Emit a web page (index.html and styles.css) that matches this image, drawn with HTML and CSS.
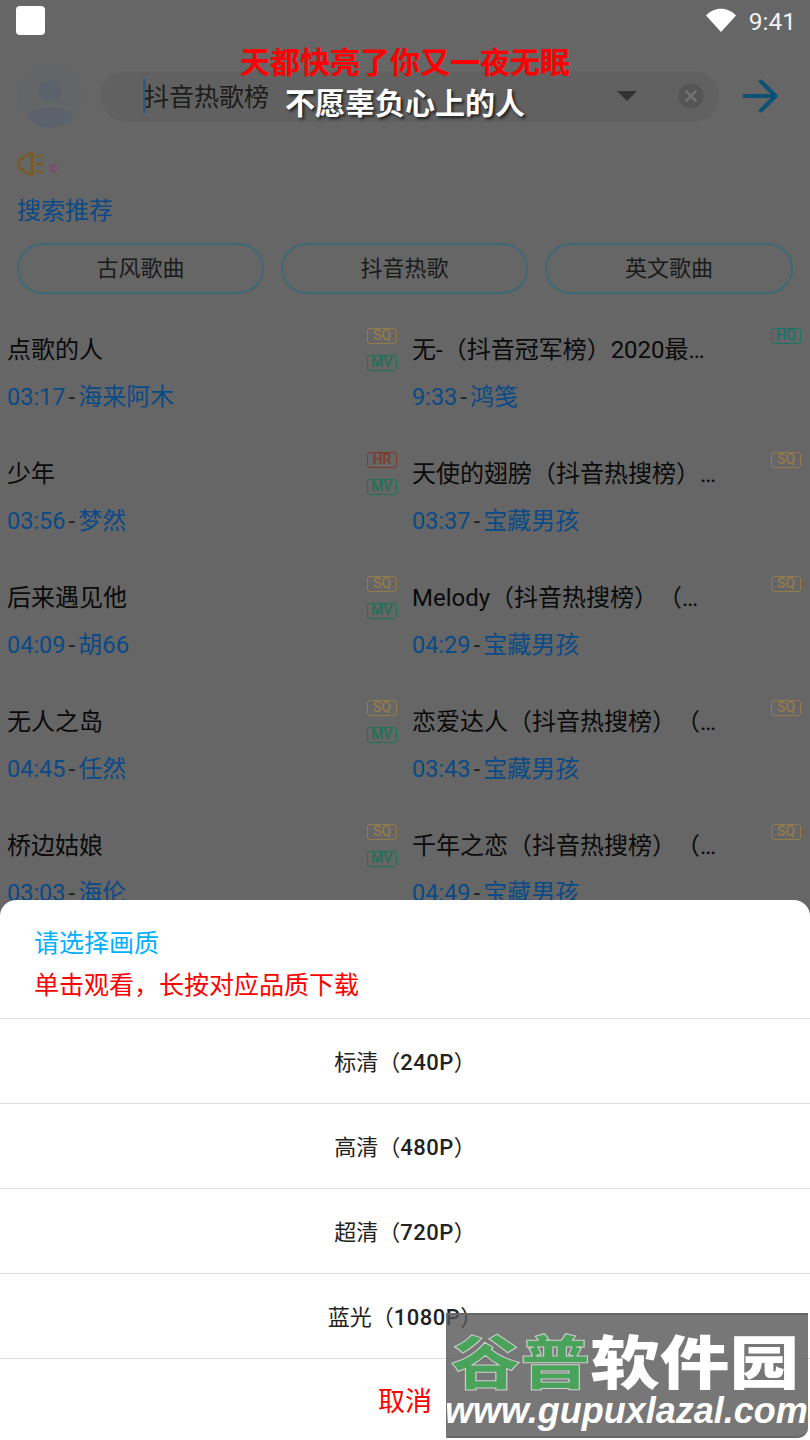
FILE: index.html
```html
<!DOCTYPE html>
<html lang="zh-CN">
<head>
  <meta charset="UTF-8" />
  <meta name="viewport" content="width=device-width, initial-scale=1" />
  <title>搜索</title>
  <link rel="stylesheet" href="styles.css">
</head>
<body>
<div class="page">

  <div class="statusbar">
    <span class="app-square"></span>
    <div class="status-right">
      <svg class="wifi" viewBox="0 0 30 24"><path d="M0 7.500C4 3.200 9.300 .8 15 .8s11 2.400 15 6.700L15 24z" fill="#fff"/></svg>
      <span class="clock">9:41</span>
    </div>
  </div>

  <div class="search-row">
    <svg class="avatar" viewBox="0 0 64 64">
      <circle cx="32" cy="32" r="32" fill="#636566"/>
      <circle cx="32" cy="27" r="10.800" fill="#5c626c"/>
      <path d="M9 52c3-5.500 12-8.500 23-8.500S52 46.500 55 52c-5.500 7.500-14 12-23 12S14.500 59.500 9 52z" fill="#5c626c"/>
    </svg>
    <div class="search-box">
      <span class="caret"></span>
      <span class="search-text">抖音热歌榜</span>
      <span class="drop"></span>
      <svg class="clear" viewBox="0 0 26 26">
        <circle cx="13" cy="13" r="12.500" fill="#555"/>
        <path d="M8.500 8.500l9 9m0-9l-9 9" stroke="#707070" stroke-width="2.800" stroke-linecap="round"/>
      </svg>
    </div>
    <svg class="go" viewBox="0 0 36 34" fill="none" stroke="#0b5075" stroke-width="4" stroke-linecap="round" stroke-linejoin="round">
      <path d="M2.500 17h30.500M19 2.500L33.500 17 19 31.500"/>
    </svg>
  </div>

  <div class="notice">
    <svg class="horn" viewBox="0 0 26 26" fill="none" stroke="#7c5c1e" stroke-width="2.400" stroke-linecap="round" stroke-linejoin="round">
      <path d="M1.500 10.500v5c0 1 .6 1.600 1.500 2l10 6.500c.8.500 2 .1 2-.8V2.800c0-.9-1.200-1.300-2-.8L3 8.500c-.9.400-1.500 1-1.500 2z"/>
      <path d="M20 6.500l4-2M20.500 13h4M20 19.500l4 2"/>
    </svg>
    <span class="dot"></span>
  </div>

  <h2 class="section-title">搜索推荐</h2>

  <div class="tags">
    <div class="tag">古风歌曲</div>
    <div class="tag">抖音热歌</div>
    <div class="tag">英文歌曲</div>
  </div>

  <div class="songs">
    <div class="song">
      <div class="song-title">点歌的人</div>
      <div class="song-sub"><span class="time">03:17</span><span class="dash">-</span><span class="blue">海来阿木</span></div>
      <div class="badges"><span class="badge sq">SQ</span><span class="badge mv">MV</span></div>
    </div>
    <div class="song">
      <div class="song-title">无-（抖音冠军榜）2020最…</div>
      <div class="song-sub"><span class="time">9:33</span><span class="dash">-</span><span class="blue">鸿笺</span></div>
      <div class="badges"><span class="badge hq">HQ</span></div>
    </div>
    <div class="song">
      <div class="song-title">少年</div>
      <div class="song-sub"><span class="time">03:56</span><span class="dash">-</span><span class="blue">梦然</span></div>
      <div class="badges"><span class="badge hr">HR</span><span class="badge mv">MV</span></div>
    </div>
    <div class="song">
      <div class="song-title">天使的翅膀（抖音热搜榜）…</div>
      <div class="song-sub"><span class="time">03:37</span><span class="dash">-</span><span class="blue">宝藏男孩</span></div>
      <div class="badges"><span class="badge sq">SQ</span></div>
    </div>
    <div class="song">
      <div class="song-title">后来遇见他</div>
      <div class="song-sub"><span class="time">04:09</span><span class="dash">-</span><span class="blue">胡66</span></div>
      <div class="badges"><span class="badge sq">SQ</span><span class="badge mv">MV</span></div>
    </div>
    <div class="song">
      <div class="song-title">Melody（抖音热搜榜）（…</div>
      <div class="song-sub"><span class="time">04:29</span><span class="dash">-</span><span class="blue">宝藏男孩</span></div>
      <div class="badges"><span class="badge sq">SQ</span></div>
    </div>
    <div class="song">
      <div class="song-title">无人之岛</div>
      <div class="song-sub"><span class="time">04:45</span><span class="dash">-</span><span class="blue">任然</span></div>
      <div class="badges"><span class="badge sq">SQ</span><span class="badge mv">MV</span></div>
    </div>
    <div class="song">
      <div class="song-title">恋爱达人（抖音热搜榜）（…</div>
      <div class="song-sub"><span class="time">03:43</span><span class="dash">-</span><span class="blue">宝藏男孩</span></div>
      <div class="badges"><span class="badge sq">SQ</span></div>
    </div>
    <div class="song">
      <div class="song-title">桥边姑娘</div>
      <div class="song-sub"><span class="time">03:03</span><span class="dash">-</span><span class="blue">海伦</span></div>
      <div class="badges"><span class="badge sq">SQ</span><span class="badge mv">MV</span></div>
    </div>
    <div class="song">
      <div class="song-title">千年之恋（抖音热搜榜）（…</div>
      <div class="song-sub"><span class="time">04:49</span><span class="dash">-</span><span class="blue">宝藏男孩</span></div>
      <div class="badges"><span class="badge sq">SQ</span></div>
    </div>
  </div>

  <div class="lyrics">
    <div class="lyric-red">天都快亮了你又一夜无眠</div>
    <div class="lyric-white">不愿辜负心上的人</div>
  </div>

  <div class="sheet">
    <div class="sheet-head">
      <div class="sheet-title">请选择画质</div>
      <div class="sheet-hint">单击观看，长按对应品质下载</div>
    </div>
    <div class="option">标清（<b>240P</b>）</div>
    <div class="option">高清（<b>480P</b>）</div>
    <div class="option">超清（<b>720P</b>）</div>
    <div class="option">蓝光（<b>1080P</b>）</div>
    <div class="option cancel">取消</div>
  </div>

  <div class="watermark">
    <div class="wm-name"><span class="wm-green">谷普</span>软件园</div>
    <div class="wm-url">www.gupuxlazal.com</div>
  </div>

</div>
</body>
</html>
```

FILE: styles.css
```css
* {
  box-sizing: border-box;
}
body {
  margin: 0;
  font-family: Roboto, "Noto Sans CJK SC", sans-serif;
  text-spacing-trim: space-all;
}
.page {
  position: relative;
  width: 810px;
  height: 1440px;
  overflow: hidden;
  background: #666;
  color: #111;
}

/* status bar */
.statusbar {
  height: 44px;
  padding: 6px 14px 0 16px;
  display: flex;
  justify-content: space-between;
}
.app-square {
  width: 29px;
  height: 29px;
  background: #fff;
  border-radius: 4px;
}
.status-right {
  display: flex;
  align-items: flex-start;
  gap: 13px;
}
.wifi {
  width: 30px;
  height: 24px;
  margin-top: 2px;
}
.clock {
  color: #f2f2f2;
  font-size: 24.500px;
  line-height: 32px;
}

/* search */
.search-row {
  height: 64px;
  margin-top: 20px;
  padding-left: 18px;
  display: flex;
  align-items: center;
}
.avatar {
  width: 64px;
  height: 64px;
  flex: none;
}
.search-box {
  width: 618px;
  height: 51px;
  margin-left: 19px;
  padding-left: 42px;
  background: #616161;
  border-radius: 26px;
  display: flex;
  align-items: center;
}
.caret {
  width: 3px;
  height: 34px;
  margin-right: -2px;
  background: #2f5a85;
}
.search-text {
  flex: 1;
  margin-top: -3px;
  font-size: 25px;
  color: #1c1c1c;
}
.drop {
  width: 0;
  height: 0;
  border-left: 10px solid transparent;
  border-right: 10px solid transparent;
  border-top: 10px solid #333;
}
.clear {
  width: 26px;
  height: 26px;
  margin: 0 15px 0 41px;
}
.go {
  width: 36px;
  height: 34px;
  margin-left: 23px;
}

/* notice + section */
.notice {
  height: 26px;
  margin-top: 23px;
  padding-left: 17px;
  display: flex;
  align-items: flex-end;
}
.horn {
  width: 26px;
  height: 26px;
}
.dot {
  flex: none;
  width: 7px;
  height: 7px;
  margin: 0 0 5px 7px;
  border: 1.500px solid #a02a80;
  border-radius: 50%;
}
.section-title {
  margin: 16px 0 0 17px;
  font-size: 24px;
  font-weight: 400;
  line-height: 36px;
  color: #0a4a86;
}
.tags {
  margin-top: 14px;
  padding-left: 17px;
  display: flex;
  gap: 17px;
}
.tag {
  width: 247px;
  height: 51px;
  border: 2px solid #3d6a74;
  border-radius: 26px;
  text-align: center;
  font-size: 22px;
  line-height: 47px;
  color: #1a1a1a;
}
.tag:last-child {
  width: 248px;
}

/* song list */
.songs {
  margin-top: 25px;
  display: grid;
  grid-template-columns: 405px 405px;
  grid-auto-rows: 124px;
}
.song {
  position: relative;
  padding: 7px 0 0 7px;
}
.song-title {
  font-size: 24px;
  line-height: 48px;
  color: #0a0a0a;
  white-space: nowrap;
}
.song-sub {
  margin-top: -1px;
  font-size: 24px;
  line-height: 48px;
}
.time {
  color: #0a4a86;
  font-size: 23.500px;
}
.dash {
  margin: 0 3px;
  color: #222;
}
.blue {
  color: #0a4a86;
}
.badges {
  position: absolute;
  top: 9px;
  right: 8px;
  display: flex;
  flex-direction: column;
  gap: 11px;
}
.song:nth-child(even) .badges {
  right: 9px;
}
.badge {
  width: 30px;
  height: 16px;
  border: 1.500px solid;
  border-radius: 3px;
  text-align: center;
  font-size: 14px;
  font-weight: 500;
  line-height: 13px;
}
.sq {
  color: #937b4e;
}
.mv {
  color: #1d7258;
}
.hr {
  color: #80382c;
}
.hq {
  color: #1d7268;
}

/* lyrics over the search bar */
.lyrics {
  position: absolute;
  top: 42px;
  left: 0;
  width: 100%;
  text-align: center;
  font-size: 30px;
  font-weight: 700;
  line-height: 41px;
}
.lyric-red {
  color: #f00;
}
.lyric-white {
  color: #fff;
  text-shadow: 2px 2px 3px rgba(0, 0, 0, 0.7);
}

/* quality sheet */
.sheet {
  position: absolute;
  left: 0;
  right: 0;
  bottom: 0;
  height: 540px;
  background: #fff;
  border-radius: 16px 16px 0 0;
}
.sheet-head {
  height: 118px;
  padding: 23px 0 0 34px;
  font-size: 25px;
  line-height: 42px;
}
.sheet-title {
  color: #00b0ff;
}
.sheet-hint {
  color: #f00;
}
.option {
  height: 85px;
  border-top: 1px solid #dedede;
  text-align: center;
  font-size: 22px;
  line-height: 87px;
  color: #222;
}
.option b {
  font-weight: 500;
  letter-spacing: 0.5px;
}
.cancel {
  font-size: 27px;
  color: #f00;
}

/* site stamp in the corner */
.watermark {
  position: absolute;
  left: 446px;
  top: 1313px;
  width: 362px;
  height: 125px;
  background: rgba(85, 85, 85, 0.8);
  border-top: 2px solid #666;
  border-bottom: 2px solid #666;
  border-left: 1px solid #777;
  border-radius: 0 0 10px 0;
  overflow: hidden;
  color: #fff;
}
.wm-name {
  margin: 12px 0 0 4px;
  font-family: "Noto Sans CJK SC", sans-serif;
  font-size: 58px;
  font-weight: 900;
  line-height: 64px;
  white-space: nowrap;
  transform: scale(1.2, 1);
  transform-origin: left center;
}
.wm-green {
  color: #4aa35a;
  -webkit-text-stroke: 1px #ccc;
}
.wm-url {
  margin-left: -2px;
  font-family: "Liberation Sans", sans-serif;
  font-size: 36px;
  font-weight: 700;
  font-style: italic;
  line-height: 40px;
  white-space: nowrap;
}
```
